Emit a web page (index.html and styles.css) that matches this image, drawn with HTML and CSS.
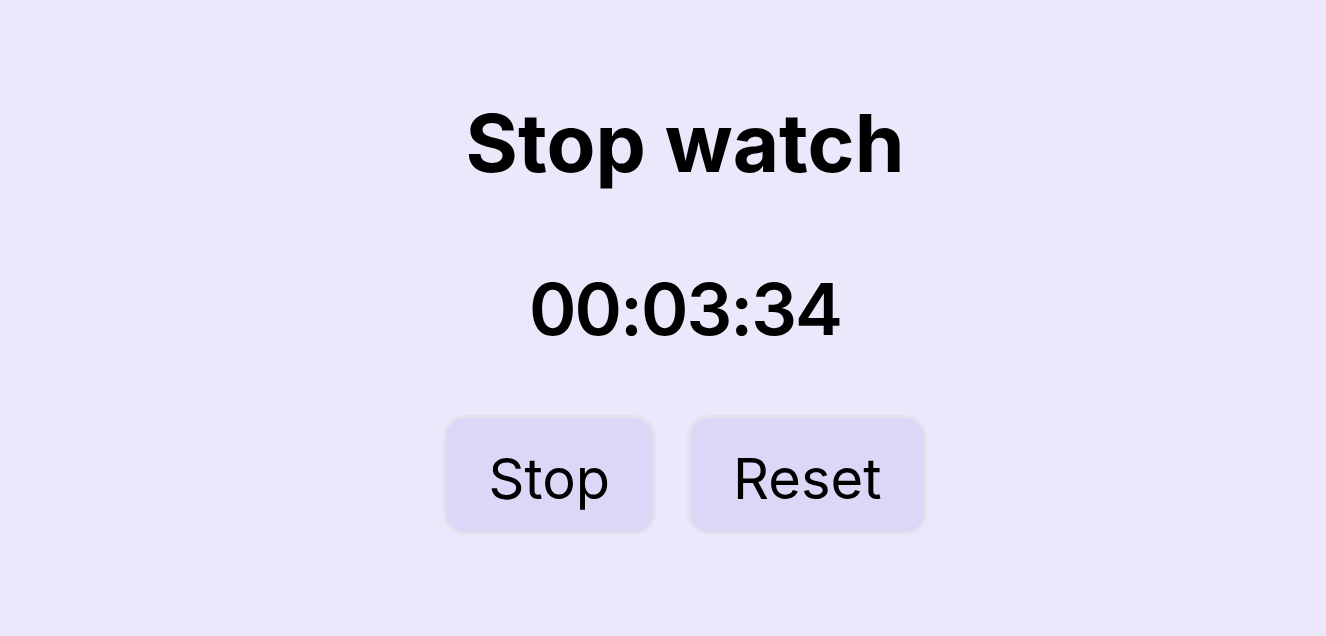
FILE: index.html
```html
<!DOCTYPE html>
<html lang="en">
<head>
<meta charset="utf-8">
<title>Stop watch</title>
<link rel="stylesheet" href="styles.css">
</head>
<body>
<main class="app">
  <h1 class="title">Stop watch</h1>
  <div class="time">00:03:34</div>
  <div class="controls">
    <button class="btn">Stop</button>
    <button class="btn">Reset</button>
  </div>
</main>
</body>
</html>
```
FILE: styles.css
```css
html, body {
  margin: 0;
  padding: 0;
  height: 100%;
}
body {
  background: #ebe8fb;
  font-family: "Inter", "Liberation Sans", sans-serif;
  color: #000;
}
.app {
  display: flex;
  flex-direction: column;
  align-items: center;
  padding-top: 103px;
  padding-left: 44px;
}
.title {
  margin: 0;
  font-size: 80px;
  font-weight: 700;
  line-height: 1;
}
.time {
  margin-top: 90px;
  font-size: 72px;
  font-weight: 600;
  line-height: 1;
  letter-spacing: -2px;
}
.controls {
  display: flex;
  gap: 31px;
  margin-top: 70px;
}
.btn {
  font-family: inherit;
  font-size: 56px;
  color: #000;
  background: #dcd6f7;
  border: 3px solid #e4e2ee;
  border-radius: 22px;
  padding: 7px 43px 0;
  height: 120px;
  line-height: 1;
}
```
